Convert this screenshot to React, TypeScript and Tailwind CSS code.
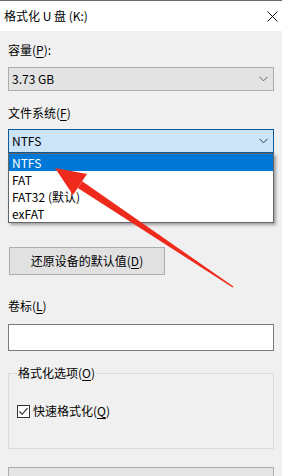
import React from "react";

const U = ({ c }: { c: string }) => <span className="underline underline-offset-[2px]">{c}</span>;

const Chevron = ({ color }: { color: string }) => (
  <svg width="9" height="6" viewBox="0 0 9 6" className="mr-[5px]">
    <path d="M0.5 0.8 L4.5 4.8 L8.5 0.8" fill="none" stroke={color} strokeWidth="1" />
  </svg>
);

export default function App() {
  return (
    <div className="relative w-[282px] h-[476px] overflow-hidden bg-[#f0f0f0] text-black text-[12px] font-['Noto_Sans_CJK_SC',sans-serif] leading-[16px]">
      <div className="h-[1px] bg-[#6a6a6a]" />
      <div className="h-[30px] bg-white flex items-center justify-between pl-[4px] pr-[4px]">
        <span className="text-[12px]">格式化 U 盘 (K:)</span>
        <svg width="11" height="11" viewBox="0 0 11 11">
          <path d="M0.5 0.5 L10.5 10.5 M10.5 0.5 L0.5 10.5" stroke="#111" strokeWidth="1" />
        </svg>
      </div>
      <div className="flex flex-col px-[8px]">
        <div className="mt-[11px] h-[16px]">
          容量(<U c="P" />):
        </div>
        <div className="mt-[9px] h-[24px] border border-[#adadad] bg-[#e3e3e3] flex items-center justify-between pl-[3px]">
          <span>3.73 GB</span>
          <Chevron color="#606060" />
        </div>
        <div className="mt-[14px] h-[16px]">
          文件系统(<U c="F" />)
        </div>
        <div className="relative mt-[8px]">
          <div className="h-[24px] border border-[#0a5a9c] bg-[#cce4f7] flex items-center justify-between pl-[3px]">
            <span>NTFS</span>
            <Chevron color="#3a3a3a" />
          </div>
          <div className="absolute left-0 right-0 top-full z-10 border border-[#646464] bg-white shadow-[2px_2px_3px_rgba(0,0,0,0.35)] flex flex-col">
            <div className="h-[17px] bg-[#0078d7] text-white pl-[3px] flex items-center">NTFS</div>
            <div className="h-[17px] pl-[3px] flex items-center">FAT</div>
            <div className="h-[17px] pl-[3px] flex items-center">FAT32 (默认)</div>
            <div className="h-[17px] pl-[3px] flex items-center">exFAT</div>
          </div>
        </div>
        <div className="mt-[94px] ml-[1px] w-[156px] h-[28px] border border-[#adadad] bg-[#e1e1e1] flex items-center justify-center">
          还原设备的默认值(<U c="D" />)
        </div>
        <div className="mt-[23px] h-[16px]">
          卷标(<U c="L" />)
        </div>
        <div className="mt-[10px] h-[27px] border border-[#7a7a7a] bg-white" />
        <div className="relative mt-[22px] h-[76px] border border-[#dcdcdc]">
          <span className="absolute left-[8px] top-[-9px] bg-[#f0f0f0] pl-[1px] pr-[1px]">
            格式化选项(<U c="O" />)
          </span>
          <div className="mt-[29px] ml-[8px] flex items-center gap-[3px]">
            <div className="w-[13px] h-[13px] border border-[#333] bg-white flex items-center justify-center">
              <svg width="11" height="11" viewBox="0 0 11 11">
                <path d="M1.5 5.5 L4.2 8.3 L9.5 2.2" fill="none" stroke="#222" strokeWidth="1.1" />
              </svg>
            </div>
            <span>
              快速格式化(<U c="Q" />)
            </span>
          </div>
        </div>
        <div className="mt-[18px] h-[30px] border border-[#adadad] bg-[#e5e5e5]" />
      </div>
      <svg className="absolute inset-0 z-20 pointer-events-none" width="282" height="476" viewBox="0 0 282 476">
        <polygon points="55,168 73,195 87,174" fill="#ee2a1d" />
        <polygon points="77.8,188.1 82.2,181.3 233.4,286.4 232.6,287.6" fill="#ee2a1d" />
      </svg>
    </div>
  );
}
